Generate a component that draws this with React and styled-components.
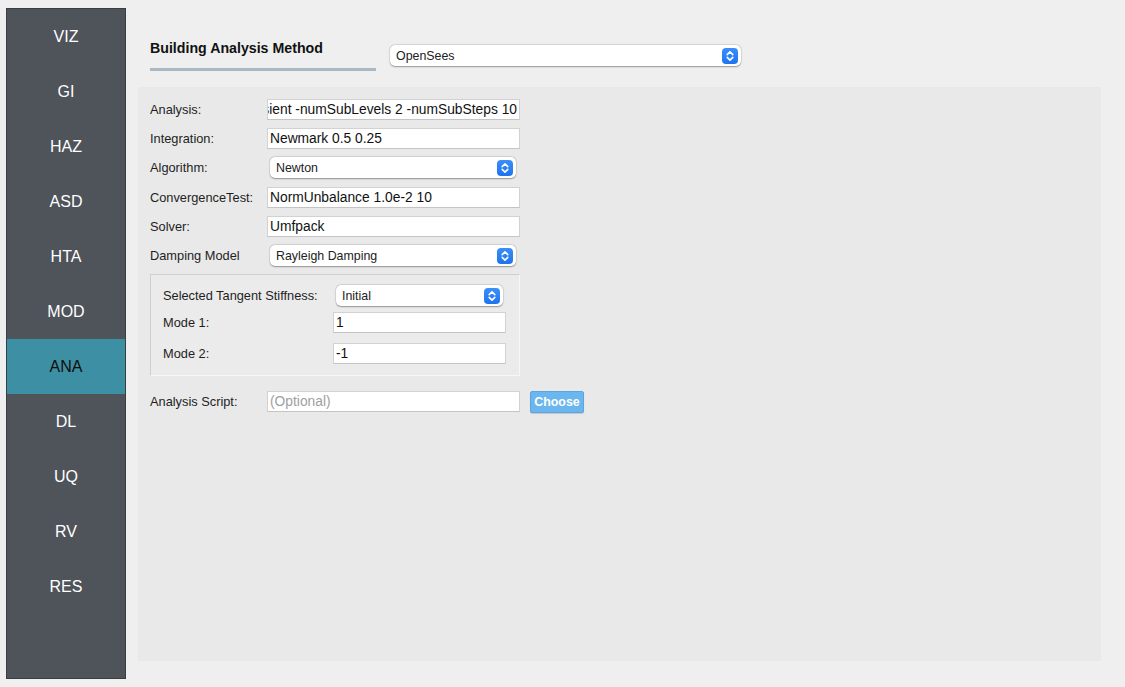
import React from "react";
import styled, { createGlobalStyle } from "styled-components";

const GlobalStyle = createGlobalStyle`
  html, body {
    margin: 0;
    padding: 0;
    background: #efefef;
  }
  body {
    font-family: "Liberation Sans", "Helvetica Neue", Arial, sans-serif;
    color: #1e1e1e;
  }
`;

const navItems = ["VIZ", "GI", "HAZ", "ASD", "HTA", "MOD", "ANA", "DL", "UQ", "RV", "RES"];

const Page = () => {
  return (
    <Shell>
      <Sidebar>
        {navItems.map((item) => (
          <NavItem key={item} active={item === "ANA"}>
            {item}
          </NavItem>
        ))}
      </Sidebar>
      <Main>
        <Header>
          <TitleBlock>
            <Title>Building Analysis Method</Title>
            <Underline />
          </TitleBlock>
          <Select width={351}>OpenSees</Select>
        </Header>
        <Panel>
          <FormRow>
            <Label>Analysis:</Label>
            <TextBox alignEnd>
              <span>Transient -numSubLevels 2 -numSubSteps 10</span>
            </TextBox>
          </FormRow>
          <FormRow>
            <Label>Integration:</Label>
            <TextBox>Newmark 0.5 0.25</TextBox>
          </FormRow>
          <FormRow>
            <Label>Algorithm:</Label>
            <SelectSlot>
              <Select width={246}>Newton</Select>
            </SelectSlot>
          </FormRow>
          <FormRow>
            <Label>ConvergenceTest:</Label>
            <TextBox>NormUnbalance 1.0e-2 10</TextBox>
          </FormRow>
          <FormRow>
            <Label>Solver:</Label>
            <TextBox>Umfpack</TextBox>
          </FormRow>
          <FormRow>
            <Label>Damping Model</Label>
            <SelectSlot>
              <Select width={246}>Rayleigh Damping</Select>
            </SelectSlot>
          </FormRow>
          <GroupBox>
            <GroupRow>
              <GroupLabel>Selected Tangent Stiffness:</GroupLabel>
              <SelectSlot pad={3}>
                <Select width={167}>Initial</Select>
              </SelectSlot>
            </GroupRow>
            <GroupRow space={6}>
              <GroupLabel>Mode 1:</GroupLabel>
              <TextBox width={174}>1</TextBox>
            </GroupRow>
            <GroupRow space={10}>
              <GroupLabel>Mode 2:</GroupLabel>
              <TextBox width={174}>-1</TextBox>
            </GroupRow>
          </GroupBox>
          <ScriptRow>
            <Label>Analysis Script:</Label>
            <TextBox placeholder>(Optional)</TextBox>
            <ChooseButton>Choose</ChooseButton>
          </ScriptRow>
        </Panel>
      </Main>
    </Shell>
  );
};

const Select = ({ width, children }) => (
  <SelectBox width={width}>
    <span>{children}</span>
    <Stepper>
      <svg width="10" height="12" viewBox="0 0 10 12" fill="none">
        <path d="M2.2 4.6 L5 1.9 L7.8 4.6" stroke="#fff" strokeWidth="1.6" strokeLinecap="round" strokeLinejoin="round" />
        <path d="M2.2 7.4 L5 10.1 L7.8 7.4" stroke="#fff" strokeWidth="1.6" strokeLinecap="round" strokeLinejoin="round" />
      </svg>
    </Stepper>
  </SelectBox>
);

export default function App() {
  return (
    <>
      <GlobalStyle />
      <Page />
    </>
  );
}

const Shell = styled.div`
  display: flex;
  align-items: flex-start;
  padding: 8px 0 0 6px;
  width: 1125px;
  height: 687px;
  box-sizing: border-box;
`;

const Sidebar = styled.nav`
  width: 120px;
  height: 671px;
  box-sizing: border-box;
  background: #4f535a;
  border: 1px solid #3a3d42;
  display: flex;
  flex-direction: column;
`;

const NavItem = styled.div`
  height: 55px;
  display: flex;
  align-items: center;
  justify-content: center;
  font-size: 16px;
  color: ${(p) => (p.active ? "#0d0d0d" : "#ffffff")};
  background: ${(p) => (p.active ? "#3d8fa3" : "transparent")};
`;

const Main = styled.div`
  margin-left: 12px;
  width: 963px;
  display: flex;
  flex-direction: column;
`;

const Header = styled.div`
  display: flex;
  align-items: flex-start;
  gap: 14px;
  padding: 31px 0 0 12px;
  height: 79px;
  box-sizing: border-box;
`;

const TitleBlock = styled.div`
  width: 226px;
  display: flex;
  flex-direction: column;
`;

const Title = styled.div`
  font-size: 14.2px;
  font-weight: bold;
  color: #111;
  height: 18px;
  line-height: 18px;
`;

const Underline = styled.div`
  margin-top: 11px;
  height: 3px;
  background: #a9b8c3;
`;

const SelectBox = styled.div`
  width: ${(p) => p.width}px;
  height: 21px;
  box-sizing: border-box;
  margin-top: 6px;
  background: #ffffff;
  border-radius: 5px;
  box-shadow: 0 0.5px 1.5px rgba(0, 0, 0, 0.35), 0 0 0 0.5px rgba(0, 0, 0, 0.08);
  display: flex;
  align-items: center;
  justify-content: space-between;
  padding: 0 3px 0 6px;
  font-size: 12.4px;
  color: #222;
`;

const Stepper = styled.div`
  width: 16px;
  height: 16px;
  border-radius: 4px;
  background: linear-gradient(#3b8ff9, #1d74ee);
  display: flex;
  align-items: center;
  justify-content: center;
`;

const Panel = styled.div`
  background: #e9e9e9;
  height: 574px;
  box-sizing: border-box;
  padding: 11px 12px;
  display: flex;
  flex-direction: column;
  gap: 7.4px;
`;

const FormRow = styled.div`
  display: flex;
  align-items: center;
  height: 22px;
`;

const Label = styled.div`
  width: 117px;
  flex-shrink: 0;
  font-size: 12.8px;
  color: #1e1e1e;
`;

const TextBox = styled.div`
  width: ${(p) => p.width || 253}px;
  height: 21px;
  box-sizing: border-box;
  background: #ffffff;
  border: 1px solid #d2d2d2;
  border-bottom-color: #c4c4c4;
  padding: 0 2px;
  display: flex;
  align-items: center;
  justify-content: ${(p) => (p.alignEnd ? "flex-end" : "flex-start")};
  overflow: hidden;
  white-space: nowrap;
  font-size: 13.8px;
  color: ${(p) => (p.placeholder ? "#a0a0a0" : "#111")};
`;

const SelectSlot = styled.div`
  width: ${(p) => (p.pad ? "auto" : "253px")};
  display: flex;
  padding-left: ${(p) => p.pad || 3}px;
  & > div {
    margin-top: 0;
  }
`;

const GroupBox = styled.div`
  width: 370px;
  height: 102px;
  box-sizing: border-box;
  border: 1px solid #cfcfcf;
  border-right-color: #f7f7f7;
  border-bottom-color: #f7f7f7;
  background: #ebebeb;
  padding: 10px 13px 0 12px;
  display: flex;
  flex-direction: column;
`;

const GroupRow = styled.div`
  display: flex;
  align-items: center;
  height: 21px;
  margin-top: ${(p) => p.space || 0}px;
`;

const GroupLabel = styled.div`
  width: 170px;
  flex-shrink: 0;
  font-size: 12.8px;
  color: #1e1e1e;
`;

const ScriptRow = styled(FormRow)`
  margin-top: 7px;
`;

const ChooseButton = styled.button`
  margin-left: 10px;
  width: 54px;
  height: 22px;
  padding: 0;
  border: 1px solid #5aa6e0;
  border-radius: 2px;
  background: #6bb6ee;
  color: #ffffff;
  font-family: inherit;
  font-size: 12.4px;
  font-weight: bold;
  box-shadow: 0 1px 1px rgba(0, 0, 0, 0.15);
`;
